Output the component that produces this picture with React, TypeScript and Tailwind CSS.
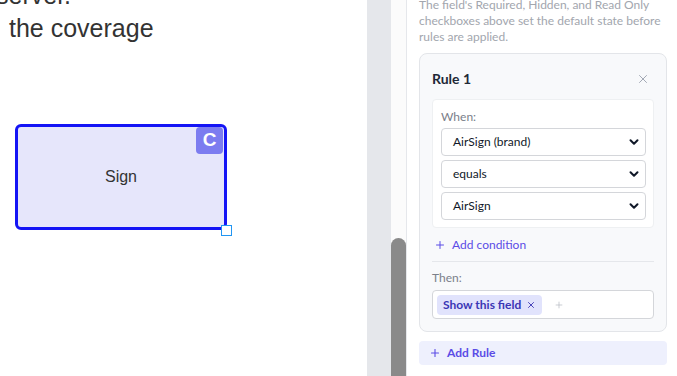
import React from 'react';
import { X, Plus } from 'lucide-react';

const ui = { fontFamily: 'Lato, "Noto Sans", sans-serif' };

const Chevron = () => (
    <svg width="10" height="10" viewBox="0 0 10 10" className="text-gray-900">
        <path d="M1.5 3.2 L5 6.7 L8.5 3.2" fill="none" stroke="currentColor" strokeWidth="2" strokeLinecap="round" strokeLinejoin="round" />
    </svg>
);

const FakeSelect = ({ value }: { value: string }) => (
    <div className="h-[28px] w-[205px] rounded-[4px] border border-[#d4d6da] bg-white pl-[11px] pr-[6px] flex items-center justify-between text-[12px] text-gray-900">
        <span>{value}</span>
        <Chevron />
    </div>
);

export default function App() {
    return (
        <div className="w-[677px] h-[376px] overflow-hidden flex bg-white">
            {/* canvas */}
            <div className="relative w-[367px] h-full overflow-hidden" style={{ fontFamily: '"Liberation Sans", Arial, sans-serif' }}>
                <div className="text-[25px] leading-[33px] text-[#333] -mt-[21px]">
                    <div className="-ml-[4px]">server.</div>
                    <div className="pl-[9px]">the coverage</div>
                </div>

                <div className="absolute left-[15px] top-[124px] w-[212px] h-[106px] rounded-[6px] border-[3px] border-[#1414f5] bg-[#e6e6fb] flex items-center justify-center">
                    <span className="text-[16px] text-[#333]">Sign</span>
                    <div className="absolute right-[1px] top-[0px] w-[27px] h-[27px] rounded-[4px] bg-[#7c7cf0] flex items-center justify-center text-white font-bold text-[19px]">C</div>
                </div>
                <div className="absolute left-[221px] top-[225px] w-[11px] h-[11px] bg-white border border-[#2196f3]" />
            </div>

            {/* gutter */}
            <div className="w-[24px] h-full bg-[#e5e7eb]" />

            {/* scrollbar */}
            <div className="w-[15px] h-full bg-[#fbfbfb] flex justify-center pt-[238px]">
                <div className="w-[9px] flex-1 rounded-t-full bg-[#8a8a8a]" />
            </div>

            {/* panel */}
            <div className="flex-1 h-full border-l border-[#e5e7eb] pl-[12px] pr-[10px] overflow-hidden" style={ui}>
                <p className="-mt-[3px] text-[12px] leading-[16px] text-[#a2a6ae]">
                    The field's Required, Hidden, and Read Only checkboxes above set the default state before rules are applied.
                </p>

                <div className="mt-[8px] rounded-[8px] border border-[#e3e5e9] bg-[#f8f9fb] px-[12px] pt-[12px] pb-[12px]">
                    <div className="h-[25px] flex items-center justify-between">
                        <span className="text-[14px] font-bold text-[#1f2937]">Rule 1</span>
                        <X className="w-[14px] h-[14px] text-[#9ca3af] mr-[4px]" strokeWidth={1.6} />
                    </div>

                    <div className="mt-[8px] rounded-[4px] border border-[#eef0f2] bg-white px-[8px] pt-[9px] pb-[7px]">
                        <div className="text-[12px] leading-[16px] text-[#7b808a]">When:</div>
                        <div className="mt-[3px] flex flex-col gap-[4px]">
                            <FakeSelect value="AirSign (brand)" />
                            <FakeSelect value="equals" />
                            <FakeSelect value="AirSign" />
                        </div>
                    </div>

                    <div className="mt-[8px] h-[18px] flex items-center gap-[6px] pl-[2px] text-[12px] text-[#5b4ce6]">
                        <Plus className="w-[12px] h-[12px]" strokeWidth={2} />
                        <span>Add condition</span>
                    </div>

                    <div className="mt-[7px] h-px bg-[#e5e7eb]" />

                    <div className="mt-[8px] text-[12px] leading-[16px] text-[#7b808a]">Then:</div>
                    <div className="mt-[4px] h-[29px] rounded-[4px] border border-[#d4d6da] bg-white flex items-center pl-[4px] gap-[12px]">
                        <div className="h-[20px] rounded-[4px] bg-[#e1e3fc] px-[6px] flex items-center gap-[5px] text-[12px] font-bold text-[#3b36b5]">
                            <span>Show this field</span>
                            <X className="w-[10px] h-[10px]" strokeWidth={2.2} />
                        </div>
                        <Plus className="w-[10px] h-[10px] text-[#b8bcc4]" strokeWidth={1.8} />
                    </div>
                </div>

                <div className="mt-[9px] h-[24px] rounded-[4px] bg-[#eef0fd] flex items-center gap-[6px] pl-[10px] text-[12px] font-bold text-[#5b4ce6]">
                    <Plus className="w-[12px] h-[12px]" strokeWidth={2.2} />
                    <span>Add Rule</span>
                </div>
            </div>
        </div>
    );
}
